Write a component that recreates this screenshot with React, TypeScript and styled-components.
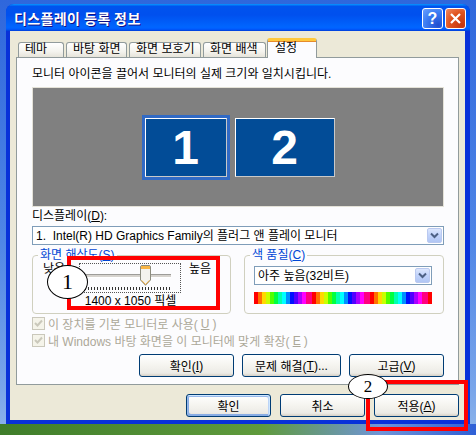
import React from "react";
import styled, { createGlobalStyle, css } from "styled-components";

const GlobalStyle = createGlobalStyle`
  html, body { margin: 0; padding: 0; }
  body {
    font-family: "Liberation Sans", "Noto Sans CJK KR", sans-serif;
    font-size: 12px;
    color: #000;
  }
`;

const tabs = [
  { label: "테마", width: 46 },
  { label: "바탕 화면", width: 61 },
  { label: "화면 보호기", width: 72 },
  { label: "화면 배색", width: 63 },
  { label: "설정", width: 50, active: true },
];

const SLIDER_VALUE = 0.68;

export default function App() {
  return (
    <Desktop>
      <GlobalStyle />
      <Window>
        <TitleBar>
          <Title>디스플레이 등록 정보</Title>
          <TitleButtons>
            <HelpButton>?</HelpButton>
            <CloseButton>
              <svg width="13" height="13" viewBox="0 0 13 13">
                <path d="M2 2 L11 11 M11 2 L2 11" stroke="#fff" strokeWidth="2.2" />
              </svg>
            </CloseButton>
          </TitleButtons>
        </TitleBar>
        <Frame>
          <Body>
            <TabRow>
              {tabs.map((t) => (
                <Tab key={t.label} $active={!!t.active} style={{ width: t.width }}>
                  {t.label}
                </Tab>
              ))}
            </TabRow>
            <Panel>
              <Line>모니터 아이콘을 끌어서 모니터의 실제 크기와 일치시킵니다.</Line>
              <Preview>
                <Selected>
                  <Monitor $w={82}>1</Monitor>
                </Selected>
                <Monitor $w={100}>2</Monitor>
              </Preview>
              <FieldLabel>
                디스플레이(<u>D</u>):
              </FieldLabel>
              <Combo>
                <ComboText>1.&nbsp; Intel(R) HD Graphics Family의 플러그 앤 플레이 모니터</ComboText>
                <ComboButton>
                  <Chevron />
                </ComboButton>
              </Combo>
              <Groups>
                <Group>
                  <Legend>
                    화면 해상도(<u>S</u>)
                  </Legend>
                  <SliderRow>
                    <SideLabel>낮음</SideLabel>
                    <SliderBox>
                      <Track />
                      <Thumb style={{ left: 4 + SLIDER_VALUE * 82 }}>
                        <svg width="11" height="21" viewBox="0 0 11 21">
                          <path
                            d="M0.5 2 Q0.5 0.5 2 0.5 H9 Q10.5 0.5 10.5 2 V15 L5.5 20.3 L0.5 15 Z"
                            fill="#F4F3EE"
                            stroke="#8C8C7E"
                          />
                          <rect x="1" y="1" width="9" height="3" fill="#F8B545" />
                          <path d="M1.5 15.3 L5.5 19.5 L9.5 15.3" fill="none" stroke="#E8A53A" />
                        </svg>
                      </Thumb>
                      <Ticks />
                    </SliderBox>
                    <SideLabel>높음</SideLabel>
                  </SliderRow>
                  <Resolution>1400 x 1050 픽셀</Resolution>
                </Group>
                <Group>
                  <Legend>
                    색 품질(<u>C</u>)
                  </Legend>
                  <ColorBody>
                    <Combo $small>
                      <ComboText>아주 높음(32비트)</ComboText>
                      <ComboButton>
                        <Chevron />
                      </ComboButton>
                    </Combo>
                    <ColorBar />
                  </ColorBody>
                </Group>
              </Groups>
              <Checks>
                <CheckRow>
                  <CheckBox>
                    <CheckMark />
                  </CheckBox>
                  이 장치를 기본 모니터로 사용(<u>U</u>)
                </CheckRow>
                <CheckRow>
                  <CheckBox>
                    <CheckMark />
                  </CheckBox>
                  내 Windows 바탕 화면을 이 모니터에 맞게 확장(<u>E</u>)
                </CheckRow>
              </Checks>
              <PanelButtons>
                <Button $w={95}>
                  확인(<u>I</u>)
                </Button>
                <Button $w={99}>
                  문제 해결(<u>T</u>)...
                </Button>
                <Button $w={95}>
                  고급(<u>V</u>)
                </Button>
              </PanelButtons>
            </Panel>
            <DialogButtons>
              <Button $w={85} $default>
                확인
              </Button>
              <Button $w={85}>취소</Button>
              <Button $w={85}>
                적용(<u>A</u>)
              </Button>
            </DialogButtons>
          </Body>
        </Frame>
      </Window>

      <Mark style={{ left: 67, top: 256, width: 153, height: 54 }} />
      <Mark style={{ left: 366, top: 380, width: 102, height: 51 }} />
      <Callout style={{ left: 47, top: 265, width: 41, height: 34, fontSize: 22 }}>1</Callout>
      <Callout style={{ left: 348, top: 374, width: 40, height: 25, fontSize: 17 }}>2</Callout>
    </Desktop>
  );
}

const Chevron = () => (
  <svg width="9" height="7" viewBox="0 0 9 7">
    <path d="M1 1.5 L4.5 5 L8 1.5" fill="none" stroke="#4D6185" strokeWidth="2" />
  </svg>
);

const CheckMark = () => (
  <svg width="9" height="9" viewBox="0 0 9 9">
    <path d="M1 4 L3.5 6.5 L8 1.5" fill="none" stroke="#CAC8BB" strokeWidth="2" />
  </svg>
);

const Desktop = styled.div`
  position: relative;
  width: 476px;
  height: 435px;
  box-sizing: border-box;
  padding: 4px 6px 0 6px;
  overflow: hidden;
  background: linear-gradient(90deg, #3f7d2a 0%, #5f9a3c 55%, #6f95d8 80%, #2e5fd6 100%) bottom / 100% 11px
      no-repeat,
    linear-gradient(180deg, #2f67dc 0%, #4f86e6 55%, #7aa6ea 90%, #8db4ea 100%);
`;

const Window = styled.div`
  width: 464px;
  height: 420px;
  display: flex;
  flex-direction: column;
  border-radius: 8px 8px 0 0;
  background: #0831d9;
  overflow: hidden;
`;

const TitleBar = styled.div`
  height: 27px;
  flex: none;
  display: flex;
  align-items: center;
  justify-content: space-between;
  padding: 0 4px 0 8px;
  background: linear-gradient(
    180deg,
    #0997ff 0%,
    #0053ee 9%,
    #0050ee 40%,
    #0066ff 86%,
    #005bff 93%,
    #003dd7 100%
  );
`;

const Title = styled.div`
  color: #fff;
  font-weight: bold;
  font-size: 14px;
  letter-spacing: 0.4px;
  text-shadow: 1px 1px #0f1089;
  font-family: "Noto Sans CJK KR", sans-serif;
`;

const TitleButtons = styled.div`
  display: flex;
  gap: 2px;
  margin-top: 2px;
`;

const titleBtn = css`
  width: 21px;
  height: 21px;
  box-sizing: border-box;
  border: 1px solid #fff;
  border-radius: 3px;
  display: flex;
  align-items: center;
  justify-content: center;
  color: #fff;
`;

const HelpButton = styled.div`
  ${titleBtn};
  font: bold 16px "Liberation Sans", sans-serif;
  background: radial-gradient(circle at 80% 85%, #1f4fd0 0%, #3b7bf2 55%, #6aa1ff 100%);
`;

const CloseButton = styled.div`
  ${titleBtn};
  background: radial-gradient(circle at 85% 85%, #c4360f 0%, #e0531e 55%, #f08a63 100%);
`;

const Frame = styled.div`
  flex: 1;
  display: flex;
  padding: 0 5px 4px 4px;
`;

const Body = styled.div`
  flex: 1;
  background: #ece9d8;
  padding: 7px 6px 0 6px;
  display: flex;
  flex-direction: column;
`;

const TabRow = styled.div`
  height: 19px;
  display: flex;
  align-items: flex-end;
  gap: 2px;
  padding-left: 2px;
`;

const Tab = styled.div<{ $active: boolean }>`
  box-sizing: border-box;
  height: 15px;
  line-height: 13px;
  padding-left: 6px;
  border: 1px solid #919b9c;
  border-bottom: none;
  border-radius: 3px 3px 0 0;
  white-space: nowrap;
  background: linear-gradient(180deg, #ffffff 0%, #f4f3ee 60%, #e6e4da 100%);
  ${({ $active }) =>
    $active &&
    css`
      position: relative;
      z-index: 1;
      height: 20px;
      margin-left: -1px;
      margin-bottom: -1px;
      padding-left: 7px;
      line-height: 15px;
      background: #fcfcfe;
      border-top: 3px solid #ffc83c;
      box-shadow: inset 0 1px 0 #e68b2c;
    `}
`;

const Panel = styled.div`
  border: 1px solid #919b9c;
  background: #fcfcfe;
  padding: 9px 14px 7px 15px;
  display: flex;
  flex-direction: column;
`;

const Line = styled.div`
  line-height: 14px;
  height: 14px;
  white-space: nowrap;
`;

const Preview = styled.div`
  margin-top: 6px;
  height: 120px;
  box-sizing: border-box;
  background: #808080;
  border: 1px solid #e4e2d8;
  display: flex;
  align-items: center;
  justify-content: center;
  gap: 5px;
`;

const Selected = styled.div`
  padding: 3px;
  background: #316ac5;
  display: flex;
`;

const Monitor = styled.div<{ $w: number }>`
  width: ${({ $w }) => $w}px;
  height: 59px;
  box-sizing: border-box;
  border: 1px solid #fff;
  border-right-color: #c9c9c9;
  border-bottom-color: #c9c9c9;
  background: #024c97;
  color: #fff;
  font: bold 48px/57px "Liberation Sans", sans-serif;
  text-align: center;
`;

const FieldLabel = styled.div`
  margin-top: 2px;
  line-height: 14px;
`;

const Combo = styled.div<{ $small?: boolean }>`
  margin-top: 3px;
  height: 19px;
  box-sizing: border-box;
  border: 1px solid #7f9db9;
  background: #fff;
  display: flex;
  align-items: center;
  ${({ $small }) =>
    $small &&
    css`
      margin-top: 4px;
      width: 178px;
    `}
`;

const ComboText = styled.div`
  flex: 1;
  padding-left: 3px;
  white-space: nowrap;
  line-height: 14px;
`;

const ComboButton = styled.div`
  width: 15px;
  height: 15px;
  margin-right: 1px;
  box-sizing: border-box;
  border: 1px solid #bac9f0;
  border-radius: 2px;
  background: linear-gradient(180deg, #dde7fd 0%, #c1d3fb 50%, #b1c6f4 100%);
  display: flex;
  align-items: center;
  justify-content: center;
`;

const Groups = styled.div`
  margin-top: 3px;
  display: grid;
  grid-template-columns: 199px 200px;
  column-gap: 13px;
`;

const Group = styled.fieldset`
  margin: 0;
  padding: 0;
  height: 66px;
  box-sizing: border-box;
  border: 1px solid #d0d0bf;
  border-radius: 4px;
  min-width: 0;
`;

const Legend = styled.legend`
  margin-left: 5px;
  padding: 0 2px;
  color: #0046d5;
  line-height: 14px;
`;

const SliderRow = styled.div`
  display: flex;
  align-items: flex-start;
  padding-left: 10px;
`;

const SideLabel = styled.div`
  line-height: 14px;
  width: 24px;
  flex: none;
`;

const SliderBox = styled.div`
  position: relative;
  width: 102px;
  height: 30px;
  margin: 1px 8px 0 12px;
  box-sizing: border-box;
  border: 1px dotted #555;
`;

const Track = styled.div`
  margin: 10px 0 0 5px;
  width: 86px;
  height: 2px;
  border-top: 1px solid #9d9c99;
  border-bottom: 1px solid #fff;
  background: #d6d3ce;
`;

const Thumb = styled.div`
  position: absolute;
  top: 1px;
  width: 11px;
  height: 21px;
`;

const Ticks = styled.div`
  margin: 9px 0 0 5px;
  width: 87px;
  height: 3px;
  background: repeating-linear-gradient(90deg, #333 0 1px, transparent 1px 3px);
`;

const Resolution = styled.div`
  margin-top: 1px;
  text-align: center;
  line-height: 14px;
  padding-right: 2px;
`;

const ColorBody = styled.div`
  padding-left: 9px;
`;

const ColorBar = styled.div`
  margin-top: 7px;
  width: 178px;
  height: 12px;
  background: repeating-linear-gradient(
    90deg,
    #ff0000 0 4px,
    #ff7000 4px 8px,
    #ffd800 8px 12px,
    #c8ff00 12px 16px,
    #50ff00 16px 20px,
    #00ff40 20px 24px,
    #00ffb0 24px 28px,
    #00ffff 28px 32px,
    #0090ff 32px 36px,
    #0010ff 36px 40px,
    #5000ff 40px 44px,
    #a800ff 44px 48px,
    #ff00ff 48px 52px,
    #ff0080 52px 58px
  );
`;

const Checks = styled.div`
  margin-top: 2px;
  display: flex;
  flex-direction: column;
  gap: 2px;
`;

const CheckRow = styled.div`
  height: 15px;
  display: flex;
  align-items: center;
  gap: 3px;
  color: #aca899;
  white-space: nowrap;
`;

const CheckBox = styled.div`
  width: 13px;
  height: 13px;
  box-sizing: border-box;
  border: 1px solid #cac8bb;
  background: #f5f4ea;
  display: flex;
  align-items: center;
  justify-content: center;
`;

const PanelButtons = styled.div`
  margin-top: 6px;
  display: flex;
  justify-content: flex-end;
  gap: 8px;
`;

const DialogButtons = styled.div`
  margin-top: 9px;
  display: flex;
  justify-content: flex-end;
  gap: 9px;
`;

const Button = styled.div<{ $w: number; $default?: boolean }>`
  width: ${({ $w }) => $w}px;
  height: 23px;
  box-sizing: border-box;
  border: 1px solid #003c74;
  border-radius: 3px;
  background: linear-gradient(180deg, #ffffff 0%, #f5f4ef 50%, #ecebe6 86%, #d6d0c5 100%);
  display: flex;
  align-items: center;
  justify-content: center;
  white-space: nowrap;
  ${({ $default }) =>
    $default &&
    css`
      box-shadow: inset -1px 1px #cee7ff, inset 1px 2px #98b8ea, inset -2px 2px #bcd4f6,
        inset 1px -1px #89ade4, inset 2px -2px #89ade4;
    `}
`;

const Mark = styled.div`
  position: absolute;
  box-sizing: border-box;
  border: 4px solid #ff0000;
  pointer-events: none;
`;

const Callout = styled.div`
  position: absolute;
  box-sizing: border-box;
  border: 1px solid #000;
  border-radius: 50%;
  background: #fff;
  display: flex;
  align-items: center;
  justify-content: center;
  font-family: "Liberation Serif", serif;
  line-height: 1;
`;
